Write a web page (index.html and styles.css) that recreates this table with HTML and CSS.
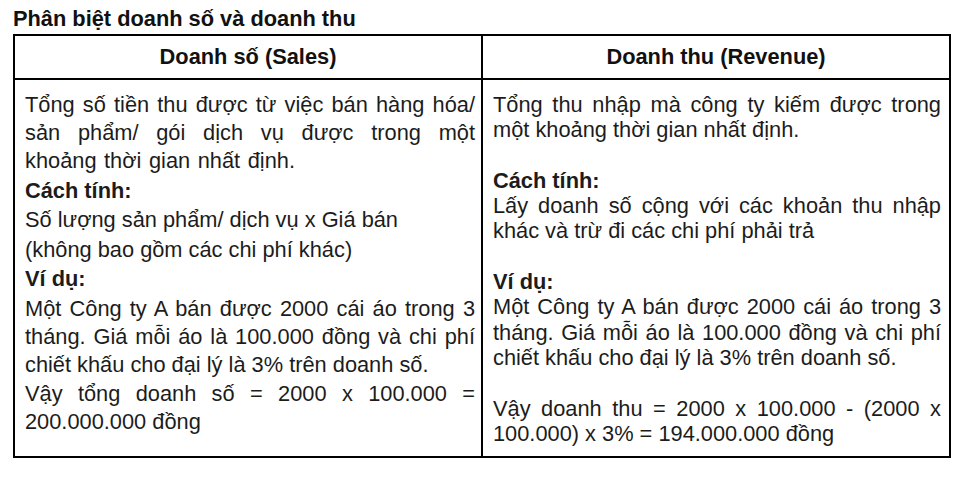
FILE: index.html
```html
<!DOCTYPE html>
<html lang="vi">
<head>
<meta charset="utf-8">
<title>Phân biệt doanh số và doanh thu</title>
<link rel="stylesheet" href="styles.css">
</head>
<body>
<div class="page">
  <h1 class="title">Phân biệt doanh số và doanh thu</h1>
  <table class="compare">
    <thead>
      <tr>
        <th class="head">Doanh số (Sales)</th>
        <th class="head">Doanh thu (Revenue)</th>
      </tr>
    </thead>
    <tbody>
      <tr>
        <td class="cell cell-left">
          <p class="txt txt-wide">Tổng số tiền thu được từ việc bán hàng hóa/ sản phẩm/ gói dịch vụ được trong một khoảng thời gian nhất định.</p>
          <p class="label">Cách tính:</p>
          <p class="txt">Số lượng sản phẩm/ dịch vụ x Giá bán</p>
          <p class="txt">(không bao gồm các chi phí khác)</p>
          <p class="label">Ví dụ:</p>
          <p class="txt">Một Công ty A bán được 2000 cái áo trong 3 tháng. Giá mỗi áo là 100.000 đồng và chi phí chiết khấu cho đại lý là 3% trên doanh số.</p>
          <p class="txt">Vậy tổng doanh số = 2000 x 100.000 = 200.000.000 đồng</p>
        </td>
        <td class="cell cell-right">
          <p class="txt">Tổng thu nhập mà công ty kiếm được trong một khoảng thời gian nhất định.</p>
          <p class="blank">&nbsp;</p>
          <p class="label">Cách tính:</p>
          <p class="txt">Lấy doanh số cộng với các khoản thu nhập khác và trừ đi các chi phí phải trả</p>
          <p class="blank">&nbsp;</p>
          <p class="label">Ví dụ:</p>
          <p class="txt">Một Công ty A bán được 2000 cái áo trong 3 tháng. Giá mỗi áo là 100.000 đồng và chi phí chiết khấu cho đại lý là 3% trên doanh số.</p>
          <p class="blank">&nbsp;</p>
          <p class="txt">Vậy doanh thu = 2000 x 100.000 - (2000 x 100.000) x 3% = 194.000.000 đồng</p>
        </td>
      </tr>
    </tbody>
  </table>
</div>
</body>
</html>
```
FILE: styles.css
```css
html, body {
  margin: 0;
  padding: 0;
  background: #ffffff;
}
.page {
  padding: 7px 16px 0 13px;
  font-family: "Liberation Sans", Arial, sans-serif;
  color: #1c1c1c;
}
.title {
  margin: 0 0 3px 0;
  font-size: 21.8px;
  line-height: 24px;
  font-weight: 700;
  color: #111;
}
.compare {
  width: 938px;
  border-collapse: collapse;
  table-layout: fixed;
  border: 2px solid #000;
}
.head {
  height: 42px;
  padding: 0;
  border: 2px solid #000;
  font-size: 21.8px;
  font-weight: 700;
  text-align: center;
  vertical-align: middle;
  color: #111;
}
.cell {
  border: 2px solid #000;
  vertical-align: top;
  padding: 12px 8px 10px 10px;
  font-size: 21.8px;
  line-height: 25.3px;
  text-align: justify;
}
.cell p {
  margin: 0;
}
.cell-left {
  padding: 11px 6px 10px 10px;
}
.cell-left p {
  line-height: 28px;
  margin-bottom: 1.5px;
}
.cell-left p:last-child {
  margin-bottom: 0;
}
.txt-wide {
  word-spacing: 1.5px;
}
.label {
  font-weight: 700;
}
```
